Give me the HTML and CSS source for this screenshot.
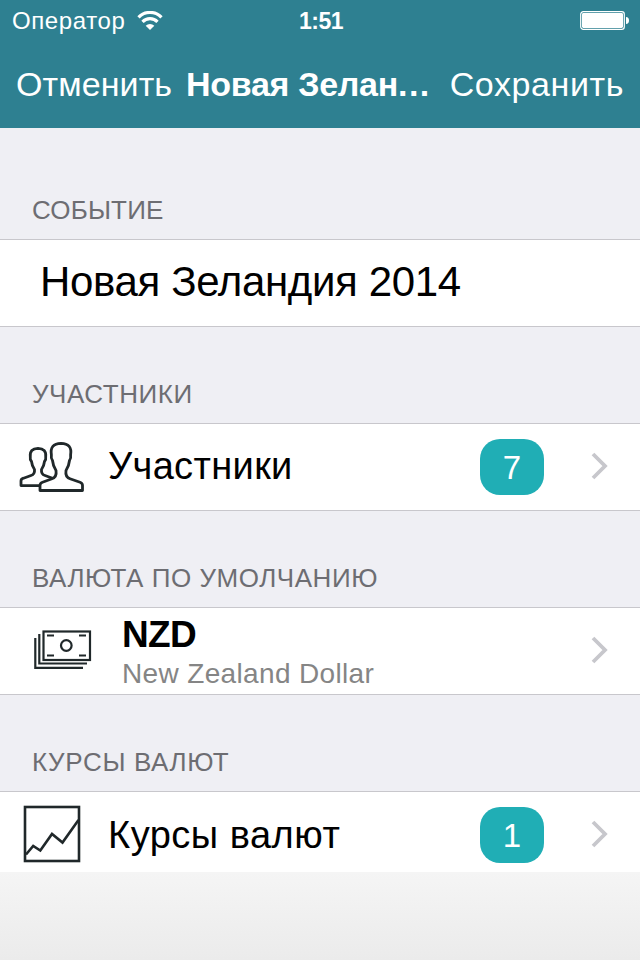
FILE: index.html
```html
<!DOCTYPE html>
<html lang="ru">
<head>
<meta charset="utf-8">
<title>Новая Зеландия 2014</title>
<link rel="stylesheet" href="styles.css">
</head>
<body>
<div class="screen">
  <header class="top">
    <div class="status">
      <div class="carrier">
        <span class="carrier-name">Оператор</span>
        <svg class="wifi" width="26" height="20" viewBox="0 0 26 20" fill="none" stroke="#fff" stroke-width="3.2">
          <path d="M1.500 6.300A16 16 0 0 1 24.500 6.300"/>
          <path d="M5.500 10.800A10.500 10.500 0 0 1 20.500 10.800"/>
          <path d="M13 19L8.700 14.700A6 6 0 0 1 17.300 14.700Z" fill="#fff" stroke="none"/>
        </svg>
      </div>
      <span class="clock">1:51</span>
      <svg class="battery" width="50" height="20" viewBox="0 0 50 20">
        <rect x=".7" y=".7" width="43.6" height="17.6" rx="2.6" fill="none" stroke="#fff" stroke-width="1.2"/>
        <rect x="2" y="2" width="41" height="15" rx="1.4" fill="#fff"/>
        <path d="M46 6Q49 6.4 49 9.5T46 13Z" fill="#fff"/>
      </svg>
    </div>
    <nav class="nav">
      <span class="cancel">Отменить</span>
      <span class="nav-title">Новая Зелан<span class="dots">...</span></span>
      <span class="save">Сохранить</span>
    </nav>
  </header>
  <main>
    <h2 class="label first"><span class="l1">СОБЫТИЕ</span></h2>
    <div class="cell event"><span class="event-name">Новая Зеландия 2014</span></div>

    <h2 class="label"><span class="l2">УЧАСТНИКИ</span></h2>
    <div class="cell">
      <div class="icon people">
        <svg width="68" height="56" viewBox="0 0 68 56" fill="#fff" stroke="#20282a" stroke-width="2.8" stroke-linejoin="round">
          <path d="M3 46.600V42Q3 40 5.500 39.200L13 36.500Q17 35.200 16.500 30.500Q14 27 13.500 22.500Q11.800 20.500 12.300 17.500Q11.500 9.600 20 9.400Q28.500 9.600 27.700 17.500Q28.200 20.500 26.500 22.500Q26 27 23.500 30.500Q23 35.200 27 36.500L34.500 39.200V46.600Z"/>
          <path d="M22 51.500V46.500Q22 44.200 24.500 43.300L34 39.800Q39 38 38 31.500Q35 27 34.500 21.500Q32.800 19 33.400 16Q31.500 4.700 43 4.400Q54.500 4.700 52.600 16Q53.200 19 51.500 21.500Q51 27 48 31.500Q47 38 52 39.800L62 43.300Q64.500 44.200 64.500 46.500V51.500Z"/>
        </svg>
      </div>
      <span class="cell-title t2">Участники</span>
      <span class="badge">7</span>
      <svg class="chevron" width="18" height="28" viewBox="0 0 18 28"><path d="M2 2L14 14L2 26" fill="none" stroke="#c7c7cc" stroke-width="3.8"/></svg>
    </div>

    <h2 class="label"><span class="l3">ВАЛЮТА ПО УМОЛЧАНИЮ</span></h2>
    <div class="cell">
      <div class="icon money">
        <svg width="58" height="40" viewBox="0 0 58 40" fill="none" stroke="#20282a" stroke-width="2.200">
          <rect x="9.500" y="1.500" width="46.500" height="28.500"/>
          <circle cx="32.300" cy="15.500" r="5.300"/>
          <path d="M13 5.500H20M45 5.500H52M13 25.500H20M45 25.500H52M5.300 4V33.500H53M1.300 8V37.800H49"/>
        </svg>
      </div>
      <div class="currency">
        <span class="code">NZD</span>
        <span class="currency-name">New Zealand Dollar</span>
      </div>
      <svg class="chevron" width="18" height="28" viewBox="0 0 18 28"><path d="M2 2L14 14L2 26" fill="none" stroke="#c7c7cc" stroke-width="3.8"/></svg>
    </div>

    <h2 class="label"><span class="l4">КУРСЫ ВАЛЮТ</span></h2>
    <div class="cell last">
      <div class="icon chart">
        <svg width="68" height="60" viewBox="0 0 68 60" fill="none" stroke="#20282a" stroke-width="2.600">
          <rect x="5" y="3" width="54" height="54"/>
          <path d="M6 50.500L13.200 42L20.300 46.500L32 30L42.500 38.500L58.500 16"/>
        </svg>
      </div>
      <span class="cell-title t4">Курсы валют</span>
      <span class="badge">1</span>
      <svg class="chevron" width="18" height="28" viewBox="0 0 18 28"><path d="M2 2L14 14L2 26" fill="none" stroke="#c7c7cc" stroke-width="3.8"/></svg>
    </div>
  </main>
  <footer class="bottom"></footer>
</div>
</body>
</html>
```
FILE: styles.css
```css
* { box-sizing: border-box; }
body { margin: 0; font-family: "Liberation Sans", Arial, sans-serif; }
.screen { width: 640px; height: 960px; display: flex; flex-direction: column; overflow: hidden; background: #efeff4; white-space: nowrap; }
svg { display: block; flex: none; }

.top { height: 128px; background: #2e8091; color: #fff; }
.status { height: 40px; display: grid; grid-template-columns: 1fr auto 1fr; align-items: center; padding: 2px 10px 0 12px; }
.carrier { display: flex; align-items: center; gap: 12px; }
.carrier-name { font-size: 24px; letter-spacing: .6px; }
.clock { font-size: 23px; font-weight: bold; letter-spacing: -.5px; }
.battery { justify-self: end; }
.nav { height: 88px; display: flex; align-items: center; padding: 0 16px; font-size: 34px; line-height: 88px; }
.cancel { width: 170px; letter-spacing: .1px; }
.nav-title { font-weight: bold; letter-spacing: -.3px; }
.dots { letter-spacing: 1.5px; }
.save { margin-left: auto; letter-spacing: .6px; }

.label { margin: 0; height: 96px; padding: 54px 0 0 32px; font-size: 26px; font-weight: normal; line-height: 26px; letter-spacing: .55px; color: #6d6d72; }
.label.first { height: 111px; padding-top: 69px; letter-spacing: .15px; }
.l4 { letter-spacing: .65px; }

.cell { height: 88px; display: flex; align-items: center; background: #fff; border-top: 1px solid #c8c7cc; border-bottom: 1px solid #c8c7cc; padding-right: 31px; }
.cell.last { height: 81px; padding-top: 6px; border-bottom: 0; }
.event { padding-left: 40px; }
.event-name { font-size: 42px; letter-spacing: -.36px; padding-bottom: 2px; }
.icon { width: 108px; flex: none; }
.people { padding-left: 18px; }
.chart { padding: 0 0 3px 20px; }
.money { width: 122px; padding: 0 0 2px 34px; }
.cell-title { font-size: 38px; flex: 1; padding-bottom: 1px; }
.t2 { letter-spacing: .35px; }
.t4 { letter-spacing: .5px; padding: 1px 0 0; }
.badge { width: 64px; height: 56px; margin-right: 47px; border-radius: 20px; background: #20aeb5; color: #fff; font-size: 33px; line-height: 57px; text-align: center; }
.chevron { margin-bottom: 2px; }
.currency { flex: 1; display: flex; flex-direction: column; padding-top: 4px; }
.code { font-size: 37px; font-weight: bold; line-height: 42px; letter-spacing: -.6px; }
.currency-name { font-size: 28px; line-height: 36px; letter-spacing: .35px; color: #858585; }

.bottom { flex: 1; background: linear-gradient(#f5f5f5, #ebebeb); }
```
